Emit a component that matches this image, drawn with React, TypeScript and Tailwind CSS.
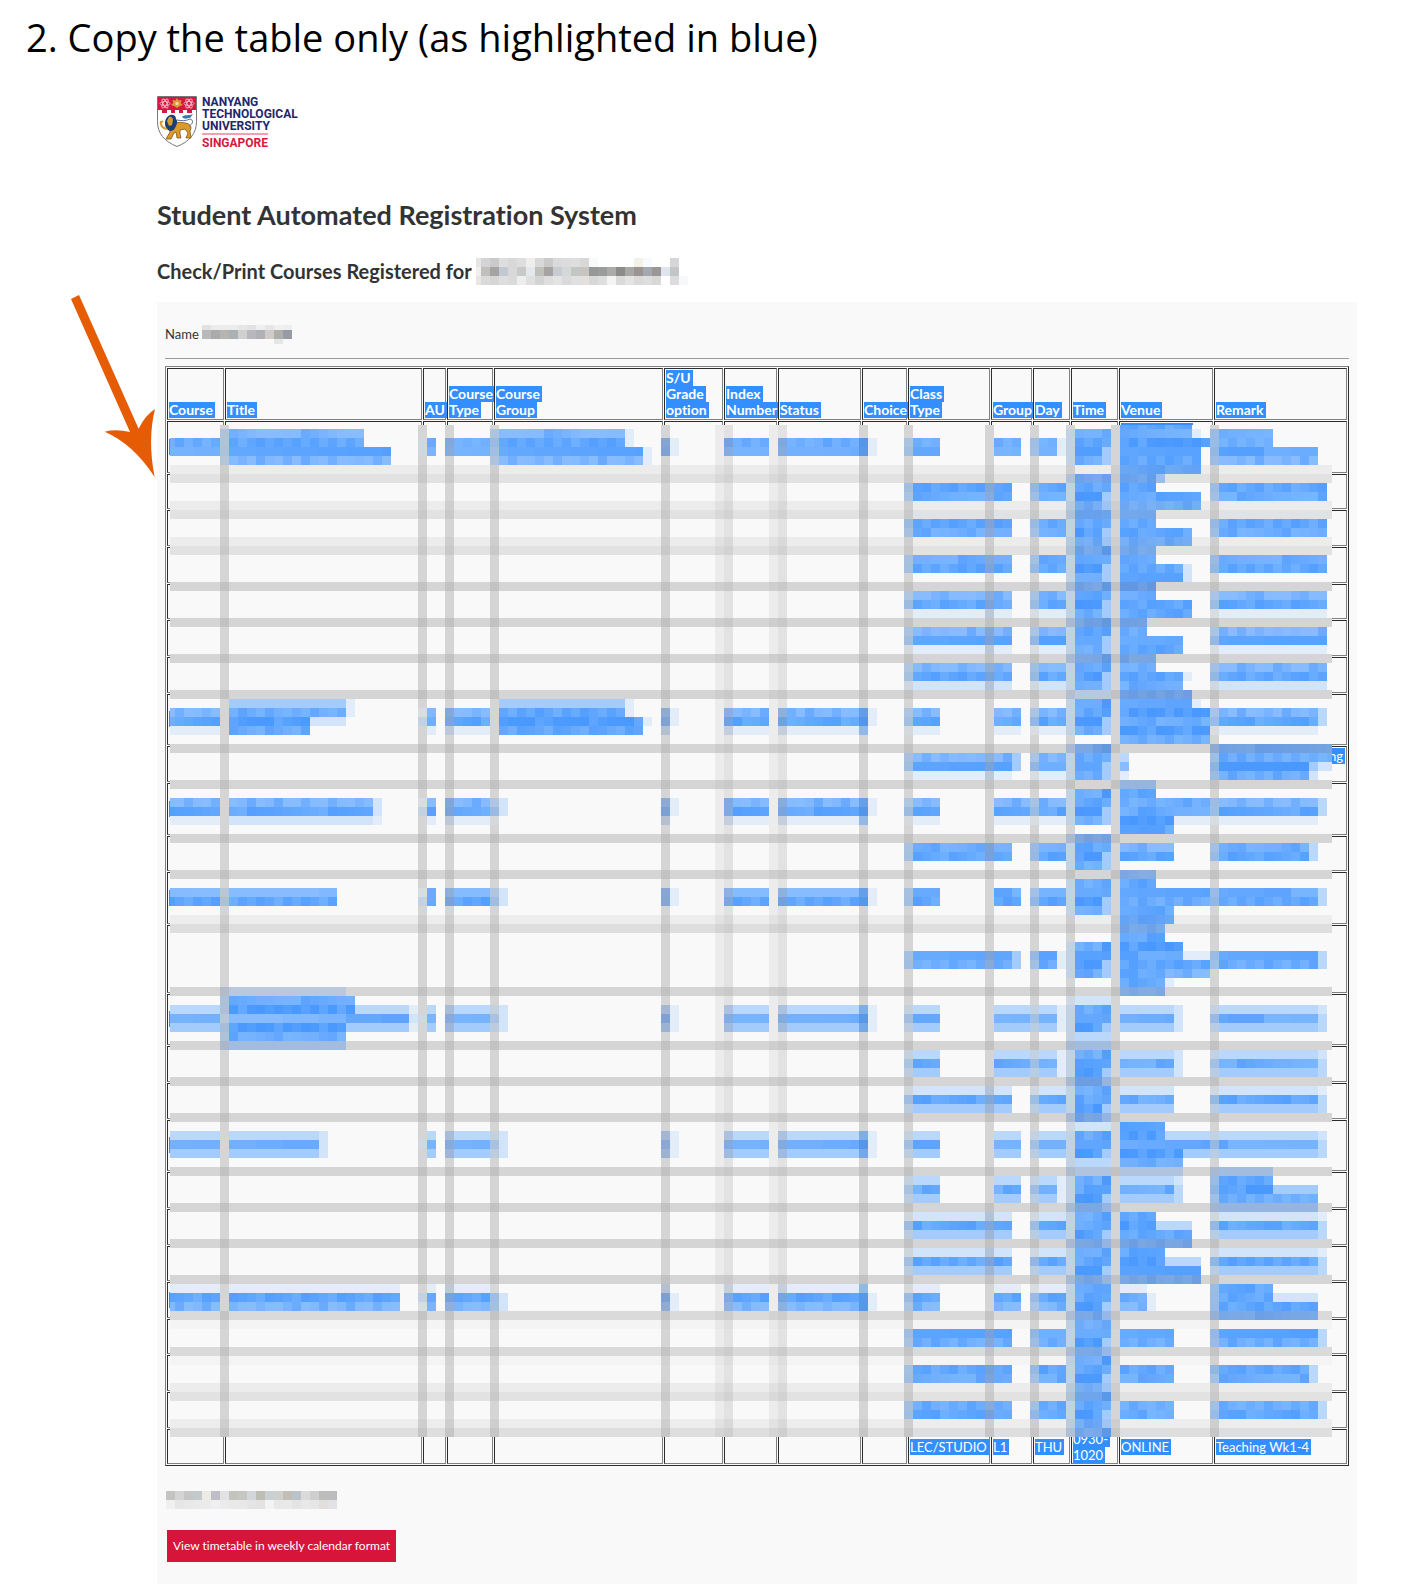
import React from "react";

/* ---------- Mosaic geometry: 9px tiles on a canvas in page units ---------- */

const TILE = 9;
const X0 = 220;
const Y0 = 429;
const LEFT = 170;
const TOP = 425;
const RIGHT = 1332;
const BOTTOM = 1437;

type RGB = [number, number, number];
type Run = [row: number, from: number, to: number, level: number];

const BLUES: RGB[] = [
  [249, 249, 249],
  [226, 237, 249],
  [209, 228, 250],
  [186, 215, 252],
  [163, 204, 252],
  [137, 188, 255],
  [114, 176, 255],
  [96, 166, 255],
  [76, 154, 255],
];

const COLUMN_BANDS: Record<number, number> = {
  0: 1, 22: 1, 25: 1, 30: 1, 49: 1, 55: 0.36, 56: 0.66, 61: 0.36, 62: 0.66,
  71: 1, 76: 1, 85: 1, 90: 1, 94: 1, 99: 1, 110: 1,
};

const ROW_BANDS: Record<number, number> = {
  4: 0.37, 5: 0.65, 8: 0.37, 9: 0.65, 12: 0.37, 13: 0.65, 17: 1, 21: 1, 25: 1, 29: 1,
  35: 1, 39: 1, 45: 1, 49: 1, 54: 0.3, 55: 0.75, 62: 1, 68: 1, 72: 1, 76: 1, 82: 1,
  86: 1, 90: 1, 94: 1, 98: 0.86, 99: 0.14, 102: 0.86, 103: 0.14, 106: 0.37, 107: 0.65,
  110: 0.3, 111: 0.75,
};

/* A line of text spread over tile rows: its first row and a strength per row. */
type Line = { at: number; levels: number[] };

function spread(line: Line, from: number, to: number, tail = 0): Run[] {
  return line.levels.flatMap((level, i): Run[] => {
    const runs: Run[] = [[line.at + i, from, to, level]];
    if (tail) runs.push([line.at + i, to, to + 1, Math.max(0, Math.min(tail, level - 1))]);
    return runs;
  });
}

function course(line: Line, hasGroup: boolean): Run[] {
  return [
    ...spread(line, -6, 0),
    ...spread(line, 23, 24),
    ...line.levels.map((l, i): Run => [line.at + i, 22, 23, Math.max(0, l - 4)]),
    ...spread(line, 25, 30),
    ...(hasGroup ? [] : spread(line, 30, 31, 2)),
    ...spread(line, 49, 50, 1),
    ...spread(line, 56, 61),
    ...spread(line, 62, 72, 1),
  ];
}

type Slot = {
  line: Line;
  wide: boolean;
  groupEnd?: number;
  dayEnd?: number;
  remarkEnd?: number;
};

function slot({ line, wide, groupEnd = 89, dayEnd = 94, remarkEnd = 0 }: Slot): Run[] {
  return [
    ...(wide ? spread(line, 76, 88, groupEnd > 89 ? 4 : 0) : [...spread(line, 76, 80), ...spread(line, 86, groupEnd)]),
    ...spread(line, 90, dayEnd, dayEnd === 93 ? 1 : 0),
    ...(remarkEnd ? spread(line, 110, remarkEnd, remarkEnd < 123 ? 3 : 0) : []),
  ];
}

function block(from: number, to: number, lines: [number, number][]): Run[] {
  return lines.map(([end, level], i): Run => [from + i, to, end, level]);
}

const L = (at: number, ...levels: number[]): Line => ({ at, levels });

const RUNS: Run[] = [
  // course summaries
  ...course(L(1, 6, 6), true),
  ...course(L(31, 5, 7, 1), true),
  ...course(L(41, 5, 7, 1), false),
  ...course(L(51, 5, 7), false),
  ...course(L(64, 3, 6, 4), false),
  ...course(L(78, 3, 6, 4), false),
  ...course(L(95, 1, 7, 5), false),

  // titles
  ...block(0, 0, [[16, 5], [16, 7], [19, 7], [19, 5]]),
  ...block(30, 1, [[14, 4], [14, 6], [10, 8], [10, 6]]),
  [30, 14, 15, 1], [31, 14, 15, 1], [32, 10, 14, 2],
  ...spread(L(41, 5, 7, 2), 1, 17, 2),
  ...spread(L(51, 5, 7), 0, 13),
  ...block(62, 0, [[14, 1], [15, 6], [15, 8], [14, 5], [14, 8], [14, 6], [14, 3]]),
  [64, 15, 21, 3], [65, 14, 21, 6], [66, 14, 21, 4], [64, 21, 22, 1], [65, 21, 22, 2], [66, 21, 22, 1],
  ...spread(L(78, 3, 6, 4), 1, 11, 2),
  ...spread(L(95, 1, 7, 5), 1, 20),

  // course groups
  ...block(0, 30, [[45, 5], [45, 7], [47, 7], [47, 5]]),
  [0, 45, 46, 1], [1, 45, 46, 1], [2, 47, 48, 1], [3, 47, 48, 1],
  ...block(30, 31, [[45, 4], [45, 7], [47, 8], [47, 7]]),
  [30, 45, 46, 1], [31, 45, 46, 1], [32, 47, 48, 1],

  // class, group, day and remark
  ...slot({ line: L(1, 6, 6), wide: false, dayEnd: 93 }),
  ...slot({ line: L(6, 7, 6), wide: true, remarkEnd: 123 }),
  ...slot({ line: L(10, 7, 6), wide: true, remarkEnd: 123 }),
  ...slot({ line: L(14, 6, 7), wide: true, remarkEnd: 123 }),
  ...slot({ line: L(18, 5, 7, 1), wide: true, remarkEnd: 123 }),
  ...slot({ line: L(22, 5, 7, 1), wide: true, remarkEnd: 123 }),
  ...slot({ line: L(26, 5, 7, 2), wide: true, remarkEnd: 123 }),
  ...slot({ line: L(31, 5, 7, 1), wide: false, remarkEnd: 122 }),
  ...slot({ line: L(36, 5, 7, 1), wide: true, groupEnd: 90 }),
  ...slot({ line: L(41, 5, 7, 1), wide: false, groupEnd: 90, remarkEnd: 122 }),
  ...slot({ line: L(46, 6, 7), wide: true, remarkEnd: 121 }),
  ...slot({ line: L(51, 6, 7), wide: false, remarkEnd: 122 }),
  ...slot({ line: L(58, 7, 6), wide: true, groupEnd: 90, dayEnd: 93, remarkEnd: 122 }),
  ...slot({ line: L(64, 3, 6, 4), wide: false, groupEnd: 90, dayEnd: 93, remarkEnd: 122 }),
  ...slot({ line: L(69, 3, 6, 4), wide: false, groupEnd: 90, dayEnd: 93, remarkEnd: 122 }),
  ...slot({ line: L(73, 2, 7, 4), wide: true, remarkEnd: 122 }),
  ...slot({ line: L(78, 3, 6, 4), wide: false, remarkEnd: 122 }),
  ...slot({ line: L(83, 3, 6, 4), wide: false, dayEnd: 93 }),
  ...slot({ line: L(87, 2, 7, 4), wide: true, remarkEnd: 122 }),
  ...slot({ line: L(91, 2, 7, 4), wide: true, remarkEnd: 122 }),
  ...slot({ line: L(95, 1, 7, 5), wide: false }),
  ...slot({ line: L(100, 7, 6), wide: true, remarkEnd: 122 }),
  ...slot({ line: L(104, 7, 6), wide: true, remarkEnd: 121 }),
  ...slot({ line: L(108, 6, 7), wide: true, remarkEnd: 122 }),
  ...block(0, 110, [[117, 6], [117, 6], [122, 7], [122, 5]]),
  ...block(35, 110, [[124, 7], [124, 6], [121, 8], [121, 6]]),
  [37, 121, 122, 4], [37, 122, 124, 2], [38, 121, 122, 2],
  ...block(82, 110, [[117, 3], [117, 7], [117, 8], [122, 6], [122, 4]]),
  [84, 117, 122, 4],
  ...block(95, 110, [[117, 7], [117, 7], [122, 7], [122, 6]]),
  [96, 117, 122, 2],

  // venues
  ...block(-1, 100, [
    [108, 7], [108, 6], [110, 8], [109, 7], [109, 7], [109, 7], [105, 7], [104, 7], [109, 7], [109, 6],
    [104, 7], [104, 7], [108, 7], [108, 6], [104, 6], [104, 6], [107, 7], [107, 7], [104, 8], [104, 6],
    [108, 7], [108, 7], [103, 7], [103, 6], [107, 7], [107, 7], [104, 6], [104, 6], [107, 7], [107, 6],
    [108, 7], [108, 6], [110, 8], [110, 6], [110, 8], [110, 6],
  ]),
  [0, 108, 109, 1], [5, 104, 105, 4], [15, 107, 108, 2], [16, 107, 108, 2], [27, 107, 108, 1], [30, 108, 109, 1],
  [36, 100, 101, 3], [37, 100, 101, 5], [38, 100, 101, 1],
  ...block(39, 100, [[104, 4], [104, 7], [110, 6], [110, 6], [106, 8], [106, 7]]),
  [42, 101, 104, 7], [43, 106, 110, 1],
  ...block(46, 100, [[106, 5], [106, 7]]),
  ...block(49, 100, [[104, 5], [104, 7], [110, 7], [110, 6], [106, 7], [106, 7], [105, 6], [105, 7], [107, 8], [107, 7], [110, 7], [110, 7], [105, 7], [105, 5]]),
  [58, 107, 110, 1], [60, 105, 110, 5], [61, 105, 106, 1],
  ...spread(L(64, 3, 6, 4), 100, 106, 2),
  ...spread(L(69, 3, 6, 4), 100, 106, 2),
  ...spread(L(73, 2, 6, 4), 100, 106),
  ...block(77, 100, [[105, 7], [105, 8], [110, 6], [107, 8], [107, 6], [107, 2]]),
  [78, 105, 110, 3], [80, 107, 110, 4],
  ...spread(L(83, 3, 6, 4), 100, 106, 3),
  ...block(87, 100, [[104, 7], [104, 8], [108, 7], [108, 6], [105, 7], [105, 8], [109, 7], [109, 6]]),
  [88, 104, 108, 3], [92, 105, 109, 3],
  ...spread(L(95, 1, 6, 5), 100, 103, 1),
  ...spread(L(100, 7, 6), 100, 106),
  ...spread(L(104, 7, 6), 100, 106),
  ...spread(L(108, 6, 6), 100, 106),

  // times
  ...([
    [0, 4], [5, 24], [30, 4], [35, 4], [40, 4], [45, 4], [50, 4], [57, 4],
    [64, 3], [69, 8], [78, 3], [83, 29],
  ] as [number, number][]).flatMap(([start, count]) =>
    Array.from({ length: count }, (_, i): Run[] => {
      const phase = i % 4;
      return [
        [start + i, 94, 95, 3],
        [start + i, 95, 98, [6, 7, 8, 6][phase]],
        [start + i, 98, 99, [8, 7, 4, 4][phase]],
      ];
    }).flat(),
  ),
  [29, 94, 99, 1], [63, 94, 99, 2], [67, 94, 99, 3], [68, 94, 99, 3], [77, 94, 99, 2], [81, 94, 99, 3], [82, 94, 99, 2],
];

const mix = (a: RGB, b: RGB, t: number): RGB => [
  Math.round(a[0] + (b[0] - a[0]) * t),
  Math.round(a[1] + (b[1] - a[1]) * t),
  Math.round(a[2] + (b[2] - a[2]) * t),
];

const css = (c: RGB) => `rgb(${c[0]},${c[1]},${c[2]})`;

/* How a vertical band tints the blue tile under it. */
const PALE: RGB = [204, 204, 200];
const DIM: RGB = [150, 160, 180];
const BAND_TINT: Record<number, [RGB, number]> = {
  0: [PALE, 0.7], 22: [PALE, 0.5], 25: [DIM, 0.5], 30: [PALE, 0.6], 49: [DIM, 0.6],
  56: [DIM, 0.4], 62: [DIM, 0.4], 71: [[66, 130, 210], 0.5], 76: [PALE, 0.6], 85: [DIM, 0.5],
  90: [PALE, 0.5], 94: [PALE, 0.5], 110: [PALE, 0.5],
};

function tiles() {
  const painted = new Map<string, { c: number; r: number; color: string }>();
  for (const [r, from, to, level] of RUNS) {
    if (level <= 0) continue;
    for (let c = from; c < to; c++) {
      if (c === 99) continue;
      const hash = c * 37 + r * 61 + ((c * r) % 7) * 13;
      const noise = (((hash % 9) + 9) % 9) / 9 - 0.45;
      let color = BLUES[level];
      if (level > 4) color = mix(color, noise > 0 ? [128, 188, 255] : [70, 150, 255], Math.abs(noise));
      const tint = BAND_TINT[c];
      const h = ROW_BANDS[r] ?? 0;
      if (tint) color = mix(color, tint[0], tint[1]);
      if (h) color = mix(color, [130, 150, 185], h * 0.42);
      painted.set(`${c},${r}`, { c, r, color: css(color) });
    }
  }
  return [...painted.values()];
}

function Mosaic() {
  return (
    <svg
      className="pointer-events-none absolute left-1 top-[57px]"
      width={1163}
      height={1014}
      viewBox="169 423 1163 1014"
      shapeRendering="crispEdges"
      aria-hidden="true"
    >
      <defs>
        <clipPath id="mosaic-area">
          <rect x={LEFT} y={TOP} width={RIGHT - LEFT} height={BOTTOM - TOP} />
        </clipPath>
      </defs>
      <rect x={1121} y={423} width={72} height={2} fill="#338fff" />
      {[439, 711, 801, 890, 1011, 1137, 1292].map((y) => (
        <rect key={y} x={169} y={y} width={1} height={16} fill="#338fff" />
      ))}
      <g clipPath="url(#mosaic-area)">
        <rect x={LEFT} y={TOP} width={RIGHT - LEFT} height={BOTTOM - TOP} fill="#f9f9f9" />
        {Object.entries(ROW_BANDS).map(([r, s]) => (
          <rect key={r} x={LEFT} y={Y0 + Number(r) * TILE} width={RIGHT - LEFT} height={TILE} fill="#adadad" opacity={s * 0.47} />
        ))}
        {Object.entries(COLUMN_BANDS).map(([c, s]) => (
          <rect key={c} x={X0 + Number(c) * TILE} y={TOP} width={TILE} height={BOTTOM - TOP} fill="#adadad" opacity={s * 0.47} />
        ))}
        {tiles().map(({ c, r, color }) => (
          <rect key={`${c},${r}`} x={X0 + c * TILE} y={Y0 + r * TILE} width={TILE} height={TILE} fill={color} />
        ))}
      </g>
    </svg>
  );
}

/* ---------- Small grey redactions ---------- */

type RedactionProps = {
  rows: string[][];
  className?: string;
  cutLeft?: number;
  cutTop?: number;
  cutBottom?: number;
};

function Redaction({ rows, className = "", cutLeft = 0, cutTop = 0, cutBottom = 0 }: RedactionProps) {
  const w = Math.max(...rows.map((r) => r.length)) * TILE - cutLeft;
  const h = rows.length * TILE - cutTop - cutBottom;
  return (
    <svg className={className} width={w} height={h} viewBox={`${cutLeft} ${cutTop} ${w} ${h}`} shapeRendering="crispEdges" aria-hidden="true">
      {rows.flatMap((row, y) =>
        row.map((fill, x) => (fill ? <rect key={`${x}-${y}`} x={x * TILE} y={y * TILE} width={TILE} height={TILE} fill={`#${fill}`} /> : null)),
      )}
    </svg>
  );
}

const px = (s: string) => s.split(" ").map((v) => (v === "-" ? "" : v));

const SEMESTER = [
  px("e8e4e2 d4d4d6 cacaca dedede d8d8da dedede f0eeec d8d8d8 cacaca dadada dcdcdc dedede d8d8d8 f7f9fa - - - - f4f0ea f7fbfd - - d6d6d6 -"),
  px("f2eeec c0bfbe a6a3a3 c4c8d2 d8d8d8 c8caca e4e8ec c0c0ba a6a3a3 c8cbd2 d6d8d8 c2c6c6 c8c4c0 969898 9a9c9c aaacaa 8c8c8a a8a8a6 9c9492 a5a8ae 9c9696 dee5ee c2c6c6 -"),
  px("ebe6e4 dadada d6d6d6 dedede dadada eeeeee e0e0e0 d4d4d4 dedede e4e4e4 dadada e0e0e0 e4e0de d8d8d8 dedede f4f4f4 dadada e4e4e4 dadada dedede d8d8d8 - dcdcdc f8f8fa"),
];

const PERSON = [
  px("e2e2e2 ececec ececec ececec e6e6e6 e2e2e2 eeeeee e6e6e6 f0f0f0 eeeeee"),
  px("b8b9bb ababab b6b6b0 abb1b3 d0d0d0 b8b8bc b0b1b4 cecbc9 adafa8 989ba4"),
  px("- - - - - - - - e6e6e8 -"),
];

const STAMP = [
  px("c4c4c2 d4d4d4 c6c6c6 c2caca eeebe6 bebec6 e2e2e4 c4c4be c6c6c2 d2d6da bebeb6 c8d0d2 ced0cc c2bdb6 bac4c8 dadada cecece bcbcbc bcbcbc"),
  px("f0f0ee e6e6e6 e8e8e8 eaeaea ebebeb f0eef0 ebebed e9e9e9 e8e8e8 e4e4e4 e2e2e0 f2f4f4 e8e8e8 ebe9e8 e2e4e6 e8e8e8 e6e6e6 e2dedd e2e2e4"),
];

/* ---------- Table ---------- */

const HEADERS: { lines: string[]; col: string }[] = [
  { lines: ["Course"], col: "w-[57px]" },
  { lines: ["Title"], col: "w-[197px]" },
  { lines: ["AU"], col: "w-[23px]" },
  { lines: ["Course", "Type"], col: "w-[46px]" },
  { lines: ["Course", "Group"], col: "w-[169px]" },
  { lines: ["S/U", "Grade", "option"], col: "w-[59px]" },
  { lines: ["Index", "Number"], col: "w-[53px]" },
  { lines: ["Status"], col: "w-[83px]" },
  { lines: ["Choice"], col: "w-[45px]" },
  { lines: ["Class", "Type"], col: "w-[82px]" },
  { lines: ["Group"], col: "w-[41px]" },
  { lines: ["Day"], col: "w-[37px]" },
  { lines: ["Time"], col: "w-[47px]" },
  { lines: ["Venue"], col: "w-[94px]" },
  { lines: ["Remark"], col: "" },
];

const ROW_HEIGHTS = [52, 35, 36, 36, 35, 36, 36, 51, 36, 52, 35, 52, 68, 51, 36, 36, 51, 36, 36, 35, 36, 35, 36, 36, 35];

const LAST_ROW: Record<number, string[]> = {
  9: ["LEC/STUDIO"],
  10: ["L1"],
  11: ["THU"],
  12: ["0930-", "1020"],
  13: ["ONLINE"],
  14: ["Teaching Wk1-4"],
};

const CELL = "border border-t-[#2c2c2c] border-l-[#2c2c2c] border-r-[#808080] border-b-[#808080] px-px";

function Selected({ lines }: { lines: string[] }) {
  return (
    <>
      {lines.map((line) => (
        <span key={line} className="block w-fit whitespace-nowrap bg-[#338fff] pr-0.5 text-white">
          {line}
        </span>
      ))}
    </>
  );
}

function CoursesTable() {
  return (
    <div className="relative mt-[7px]">
      <table className="w-full table-fixed border-separate border-spacing-px border border-t-[#808080] border-l-[#808080] border-r-[#2c2c2c] border-b-[#2c2c2c] text-left leading-4">
        <colgroup>
          {HEADERS.map((h, i) => (
            <col key={i} className={h.col} />
          ))}
        </colgroup>
        <thead className="text-[14px] leading-4">
          <tr>
            {HEADERS.map((h, i) => (
              <th key={i} scope="col" className={`${CELL} py-px align-bottom font-bold`}>
                <Selected lines={h.lines} />
              </th>
            ))}
          </tr>
        </thead>
        <tbody className="text-[13px] leading-4">
          {ROW_HEIGHTS.map((height, r) => (
            <tr key={r} style={{ height }}>
              {HEADERS.map((_, c) => (
                <td key={c} className={`${CELL} ${r === 8 ? "align-top" : "align-middle"}`}>
                  {r === ROW_HEIGHTS.length - 1 && LAST_ROW[c] ? <Selected lines={LAST_ROW[c]} /> : null}
                  {r === 8 && c === 14 ? (
                    <span className="mt-px block bg-[#338fff] pr-0.5 text-right text-white">ng</span>
                  ) : null}
                </td>
              ))}
            </tr>
          ))}
        </tbody>
      </table>
      <Mosaic />
    </div>
  );
}

/* ---------- Logo and arrow ---------- */

function Crest() {
  return (
    <svg width="40" height="51" viewBox="0 0 40 51" aria-hidden="true">
      <path d="M.5.5h39v25c0 12-7 20-19.500 25C7.500 45.500.5 37.500.5 25.500z" fill="#fff" stroke="#77777b" />
      <path d="M1 1h38v13h-4v3h-5v-3h-4v3h-4v-3h-4v3h-4v-3h-4v3H5v-3H1z" fill="#d7173f" />
      <g fill="none" stroke="#f0b9c5" strokeWidth=".9">
        <ellipse cx="8" cy="7.500" rx="5" ry="2" />
        <ellipse cx="8" cy="7.500" rx="5" ry="2" transform="rotate(60 8 7.500)" />
        <ellipse cx="8" cy="7.500" rx="5" ry="2" transform="rotate(120 8 7.500)" />
        <ellipse cx="32" cy="7.500" rx="5" ry="2" />
        <ellipse cx="32" cy="7.500" rx="5" ry="2" transform="rotate(60 32 7.500)" />
        <ellipse cx="32" cy="7.500" rx="5" ry="2" transform="rotate(120 32 7.500)" />
      </g>
      <path d="m20 2 1.500 2.500 3-.5-.8 3 2.300 2-3 1L20 12l-3-2-3-1 2.300-2-.8-3 3 .5z" fill="#e0993a" />
      <circle cx="20" cy="7.500" r="1.600" fill="#f7dfa8" />
      <path d="M16 28c4-2 9-2 12-1 3 0 6 2 6 5l-1 3 1 7h-5l2-5-3-4-5 1v4l1 4h-4l-1-6-2 1-3 6H9l4-7-1-5z" fill="#dc9a2b" stroke="#6d4513" strokeWidth=".7" />
      <path d="M13 19c4-1 6 1 6 4 2 2 1 5 0 7-1 3-3 5-6 5-3-1-5-4-5-7 0-4 1-7 5-9z" fill="#1d3f78" />
      <path d="M12 21c2-1 4 1 4 3l-1 5-3 1-2-5z" fill="#dc9a2b" />
      <path d="M4 25c-1 3 1 6 3 7l3 1M3 27l3-2" fill="none" stroke="#dc9a2b" strokeWidth="2" />
      <path d="M20 24c4 1 9 1 13-1 4 1 3 5-1 7" fill="none" stroke="#566f92" strokeWidth="1" />
      <path d="M25 21c3-3 7-1 11-3l-3 4c-3 0-5 2-8-1z" fill="#3676b8" />
    </svg>
  );
}

function Arrow() {
  return (
    <svg className="pointer-events-none absolute left-[60px] top-[280px]" width="96" height="200" viewBox="0 0 288 600" aria-hidden="true">
      <path d="M33 57 57 45 236 446Q256 405 285 387Q262 480 284 591Q220 492 134 455Q168 446 210 456Z" fill="#e65c05" />
    </svg>
  );
}

export default function App() {
  return (
    <div className="relative flex min-h-screen flex-col bg-white font-['Lato',sans-serif] text-[#333] [font-variant-ligatures:none]">
      <h1 className="ml-[26px] mt-2.5 whitespace-nowrap font-['Open_Sans',sans-serif] text-[38px] leading-[54px] text-black">
        2. Copy the table only (as highlighted in blue)
      </h1>
      <main className="ml-[157px] mr-11 mt-8 flex flex-1 flex-col">
        <header className="flex h-[51px] gap-[5px]">
          <Crest />
          <div className="font-['Roboto',sans-serif] text-[12px] font-bold leading-[12px] text-[#22276b]">
            <div>NANYANG</div>
            <div>TECHNOLOGICAL</div>
            <div>UNIVERSITY</div>
            <div className="mt-px w-fit border-t-2 border-[#f0a0b0] pt-0.5 text-[#d7173f]">SINGAPORE</div>
          </div>
        </header>
        <h2 className="mt-[50px] text-[27px] font-bold leading-9">Student Automated Registration System</h2>
        <h3 className="mt-[25px] flex h-[27px] items-center gap-1 whitespace-nowrap text-[20px] font-bold leading-[27px]">
          Check/Print Courses Registered for
          <Redaction rows={SEMESTER} cutLeft={4} />
        </h3>
        <section className="mt-[17px] flex-1 bg-[#f9f9f9] px-2 pb-5 pt-[23px]">
          <div className="flex h-[27px] items-start gap-[3px] text-[13px] leading-[18px]">
            Name
            <Redaction rows={PERSON} cutTop={4} cutBottom={4} />
          </div>
          <hr className="mt-[6px] border-t-[#9a9a9a]" />
          <CoursesTable />
          <Redaction rows={STAMP} className="ml-px mt-[25px] block" />
          <button type="button" className="ml-0.5 mt-[21px] block h-8 bg-[#d7143a] px-1.5 text-[12px] leading-4 text-white">
            View timetable in weekly calendar format
          </button>
        </section>
      </main>
      <Arrow />
    </div>
  );
}
